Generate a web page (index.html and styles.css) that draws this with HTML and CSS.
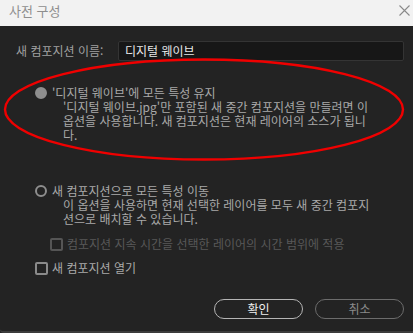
FILE: index.html
```html
<!DOCTYPE html>
<html lang="ko">
<head>
<meta charset="utf-8">
<title>사전 구성</title>
<link rel="stylesheet" href="styles.css">
</head>
<body>
<div class="window">
  <div class="titlebar">
    <span class="title">사전 구성</span>
    <svg class="close" width="11" height="11" viewBox="0 0 11 11"><path d="M0.5 0.5L10.5 10.5M10.5 0.5L0.5 10.5" stroke="#8a8a8a" stroke-width="1.1" fill="none"/></svg>
  </div>
  <div class="content">
    <div class="name-row">
      <span class="label">새 컴포지션 이름:</span>
      <div class="input">디지털 웨이브</div>
    </div>

    <div class="option opt1">
      <span class="radio filled"></span>
      <div class="otext">
        <div class="otitle">'디지털 웨이브'에 모든 특성 유지</div>
        <div class="desc">'디지털 웨이브.jpg'만 포함된 새 중간 컴포지션을 만들려면 이<br>옵션을 사용합니다. 새 컴포지션은 현재 레이어의 소스가 됩니<br>다.</div>
      </div>
    </div>

    <div class="option opt2">
      <span class="radio"></span>
      <div class="otext">
        <div class="otitle">새 컴포지션으로 모든 특성 이동</div>
        <div class="desc">이 옵션을 사용하면 현재 선택한 레이어를 모두 새 중간 컴포지<br>션으로 배치할 수 있습니다.</div>
      </div>
    </div>

    <div class="check disabled">
      <span class="box"></span>
      <span>컴포지션 지속 시간을 선택한 레이어의 시간 범위에 적용</span>
    </div>

    <div class="check open">
      <span class="box"></span>
      <span>새 컴포지션 열기</span>
    </div>

    <div class="buttons">
      <button class="btn ok">확인</button>
      <button class="btn cancel">취소</button>
    </div>
  </div>
  <svg class="annot" width="413" height="333" viewBox="0 0 413 333"><ellipse cx="204" cy="109.5" rx="199" ry="50" fill="none" stroke="#f00000" stroke-width="2.4"/></svg>
</div>
</body>
</html>
```

FILE: styles.css
```css
html, body {
  margin: 0;
  padding: 0;
  background: #232323;
}
body {
  font-family: "Noto Sans CJK KR", "Noto Sans", sans-serif;
}
.window {
  position: relative;
  width: 413px;
  height: 333px;
  overflow: hidden;
  display: flex;
  flex-direction: column;
  box-sizing: border-box;
}
.titlebar {
  height: 26px;
  flex: none;
  background: #f2f2f2;
  display: flex;
  align-items: center;
  justify-content: space-between;
  padding: 0 3px 0 9px;
}
.title {
  font-size: 13px;
  color: #8e8e8e;
  line-height: 26px;
  margin-top: -4px;
}
.close {
  margin-top: -6px;
}
.content {
  flex: 1;
  background: #232323;
  padding: 15px 9px 0 16px;
  display: flex;
  flex-direction: column;
  border-bottom: 2px solid #3c3c3c;
  border-bottom-left-radius: 4px;
  font-size: 12px;
  color: #a9a9a9;
  line-height: 14px;
}
.name-row {
  display: flex;
  align-items: center;
  height: 20px;
}
.label {
  width: 102px;
  color: #a0a0a0;
}
.input {
  flex: 1;
  height: 20px;
  box-sizing: border-box;
  background: #171717;
  border: 1px solid #343434;
  border-radius: 2px;
  color: #e8e8e8;
  padding-left: 6px;
  line-height: 18px;
}
.option {
  display: flex;
  align-items: flex-start;
  margin-left: 19px;
}
.opt1 { margin-top: 25px; }
.opt2 { margin-top: 42px; }
.radio {
  flex: none;
  width: 12px;
  height: 12px;
  box-sizing: border-box;
  border-radius: 50%;
  border: 2px solid #8e8e8e;
  margin: 1px 5px 0 0;
}
.radio.filled {
  background: #8e8e8e;
}
.otitle {
  color: #a9a9a9;
}
.desc {
  padding-left: 11px;
  color: #a9a9a9;
}
.check {
  display: flex;
  align-items: center;
  height: 14px;
}
.box {
  flex: none;
  width: 13px;
  height: 13px;
  box-sizing: border-box;
  border: 2px solid #8a8a8a;
  border-radius: 2px;
  margin-right: 4px;
}
.check.disabled {
  margin-top: 11px;
  margin-left: 34px;
  color: #585858;
}
.check.disabled .box {
  border-color: #555555;
}
.check.open {
  margin-top: 10px;
  margin-left: 19px;
  color: #a9a9a9;
}
.buttons {
  display: flex;
  justify-content: flex-end;
  gap: 12px;
  margin-top: 24px;
}
.btn {
  width: 89px;
  height: 20px;
  box-sizing: border-box;
  border-radius: 10px;
  background: transparent;
  font-family: inherit;
  font-size: 12px;
  line-height: 16px;
  padding: 0;
}
.btn.ok {
  border: 1.5px solid #b5b5b5;
  color: #f0f0f0;
}
.btn.cancel {
  border: 1.5px solid #6c6c6c;
  color: #8a8a8a;
}
.annot {
  position: absolute;
  left: 0;
  top: 0;
  pointer-events: none;
}
```
